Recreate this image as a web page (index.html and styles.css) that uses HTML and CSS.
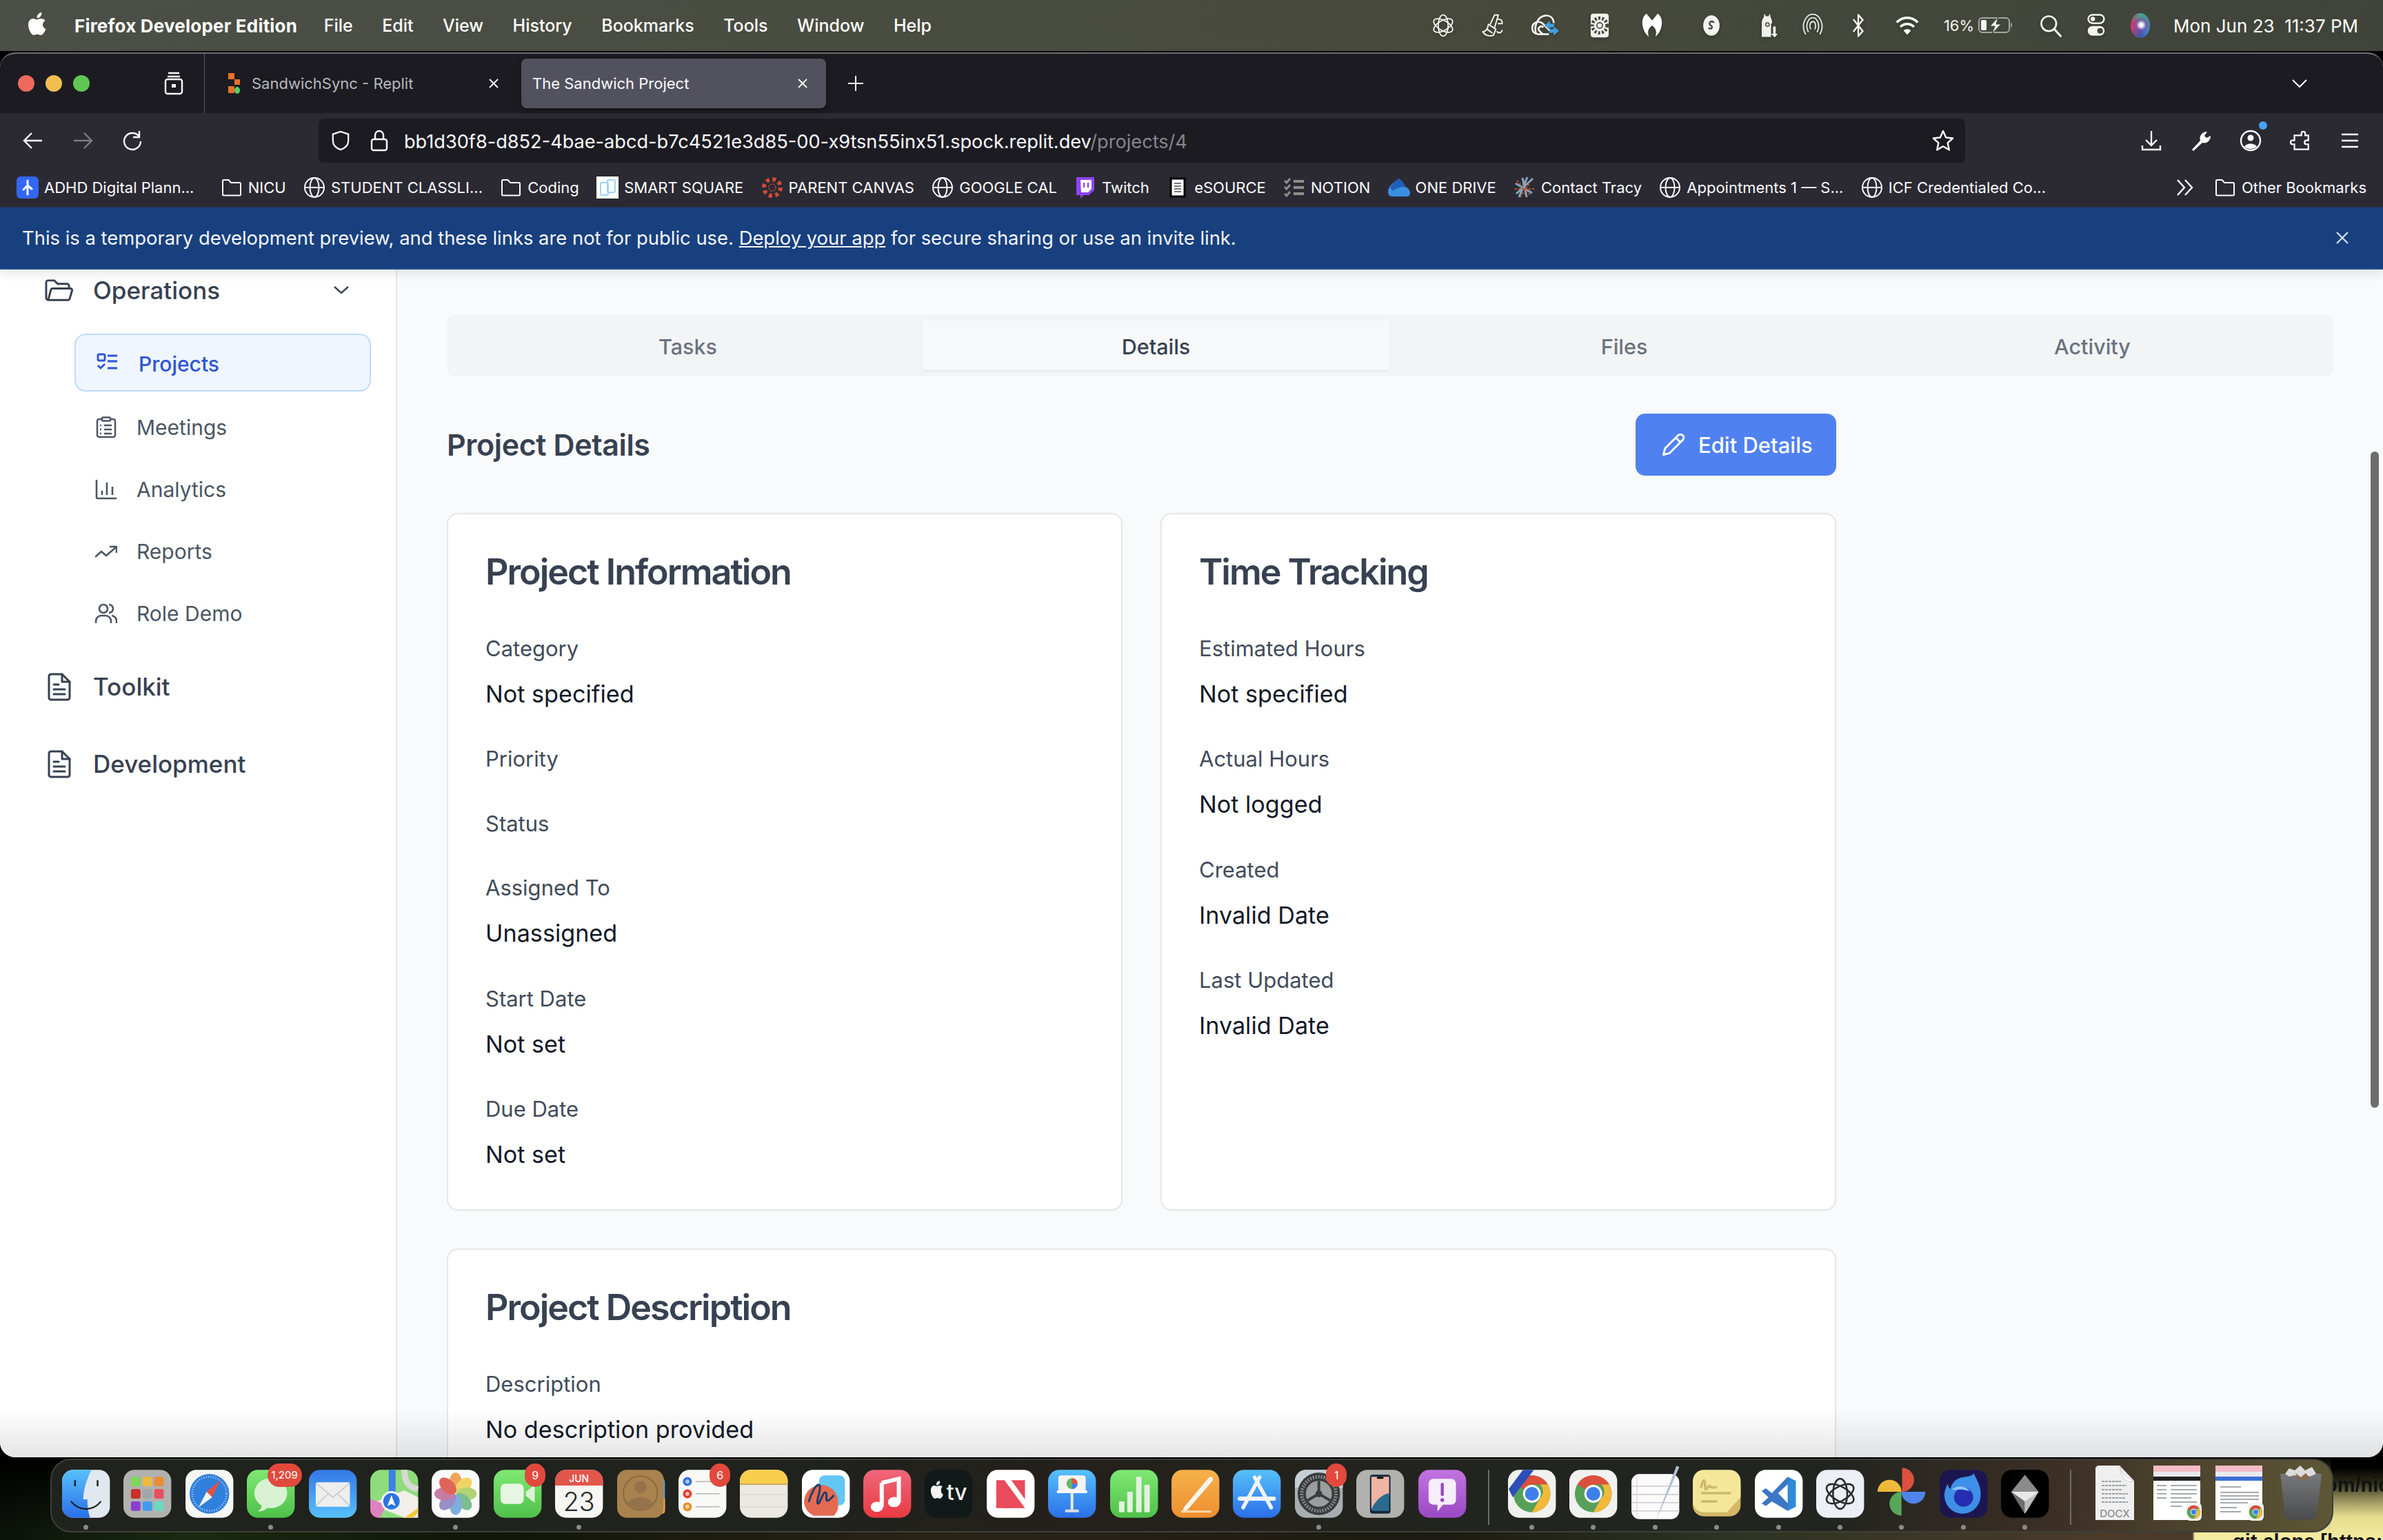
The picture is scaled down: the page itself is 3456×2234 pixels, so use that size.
FILE: index.html
```html
<!DOCTYPE html>
<html lang="en">
<head>
<meta charset="utf-8">
<title>The Sandwich Project</title>
<link rel="stylesheet" href="styles.css">
</head>
<body>
<svg class="sprite" aria-hidden="true">
  <defs>
    <linearGradient id="gBlue" x1="0" y1="0" x2="0" y2="1"><stop offset="0" stop-color="#57c1fb"/><stop offset="1" stop-color="#2a6fe8"/></linearGradient>
    <linearGradient id="gBlue2" x1="0" y1="0" x2="0" y2="1"><stop offset="0" stop-color="#3478e6"/><stop offset="1" stop-color="#58c0fa"/></linearGradient>
    <linearGradient id="gGreen" x1="0" y1="0" x2="0" y2="1"><stop offset="0" stop-color="#7fe873"/><stop offset="1" stop-color="#4fc14a"/></linearGradient>
    <linearGradient id="gRed" x1="0" y1="0" x2="0" y2="1"><stop offset="0" stop-color="#f0677c"/><stop offset="1" stop-color="#e83a42"/></linearGradient>
    <linearGradient id="gOrange" x1="0" y1="0" x2="0" y2="1"><stop offset="0" stop-color="#f6b24a"/><stop offset="1" stop-color="#ee8f30"/></linearGradient>
    <linearGradient id="gPurple" x1="0" y1="0" x2="0" y2="1"><stop offset="0" stop-color="#c274e0"/><stop offset="1" stop-color="#9a49c4"/></linearGradient>
    <linearGradient id="gTrash" x1="0" y1="0" x2="0" y2="1"><stop offset="0" stop-color="#77787a"/><stop offset="1" stop-color="#4a4b4c"/></linearGradient>
    <symbol id="folder" viewBox="0 0 32 32"><path d="M3 26V6.500A1.500 1.500 0 0 1 4.500 5h7l3.500 4h12.500A1.500 1.500 0 0 1 29 10.500V26a1.500 1.500 0 0 1-1.500 1.500h-23A1.500 1.500 0 0 1 3 26Z" fill="none" stroke="#fbfbfe" stroke-width="2"/></symbol>
    <symbol id="globe" viewBox="0 0 32 32"><g fill="none" stroke="#fbfbfe" stroke-width="2"><circle cx="16" cy="16" r="14"/><ellipse cx="16" cy="16" rx="6.500" ry="14"/><path d="M2 16h28"/></g></symbol>
    <symbol id="doc" viewBox="0 0 34 41"><g fill="none" stroke="#374151" stroke-width="3" stroke-linecap="round" stroke-linejoin="round"><path d="M2 5a3 3 0 0 1 3-3h16l11 11v23a3 3 0 0 1-3 3H5a3 3 0 0 1-3-3Z"/><path d="M21 2v11h11M9 17h7M9 24h16M9 31h16"/></g></symbol>
    <symbol id="chrome" viewBox="0 0 60 60"><circle cx="30" cy="30" r="28" fill="#57a05a"/><path d="M30 2a28 28 0 0 1 24.200 14H30a14 14 0 0 0-12.100 7L6 16A28 28 0 0 1 30 2Z" fill="#dd4f3e"/><path d="M54.200 16A28 28 0 0 1 30 58l12-21a14 14 0 0 0 0-21Z" fill="#f2b93b"/><circle cx="30" cy="30" r="13.500" fill="#fff"/><circle cx="30" cy="30" r="10.500" fill="#3f7fe8"/></symbol>
    <symbol id="knot" viewBox="0 0 40 40"><g fill="none" stroke="currentColor" stroke-width="2"><ellipse cx="20" cy="20" rx="8" ry="17"/><ellipse cx="20" cy="20" rx="8" ry="17" transform="rotate(60 20 20)"/><ellipse cx="20" cy="20" rx="8" ry="17" transform="rotate(120 20 20)"/></g></symbol>
  </defs>
</svg>

<div class="screen">
  <div class="wallpaper" aria-hidden="true">
    <span class="wp-url">om/nicu</span>
    <span class="wp-git">git clone [https://githu</span>
  </div>

  <header class="menubar">
    <svg class="apple" viewBox="0 0 28 34"><path d="M21 18c0-4 3-5.500 3.500-6-2-2.800-5-3-6-3-2.500-.3-5 1.500-6.200 1.500S9 9 7 9c-3 0-7 2.500-7 9 0 6.500 4.500 15 8 15 1.800 0 3-1.200 5-1.200s3 1.200 5 1.200c3.300 0 6.500-6 7.500-9-3-1.200-4.500-3.500-4.500-6ZM17.500 6c1.500-1.800 2.300-3.500 2-6-2 .1-4 1.200-5.200 2.700-1 1.200-2 3-1.700 5.300 2 .2 3.700-.6 4.900-2Z" fill="#fff"/></svg>
    <nav class="menus">
      <span class="menu-app">Firefox Developer Edition</span>
      <span>File</span><span>Edit</span><span>View</span><span>History</span><span>Bookmarks</span><span>Tools</span><span>Window</span><span>Help</span>
    </nav>
    <div class="status">
      <svg class="st" viewBox="0 0 40 40"><use href="#knot" class="st-white"/></svg>
      <svg class="st" viewBox="0 0 40 40"><g fill="none" stroke="#f4f4f2" stroke-width="2.200" stroke-linejoin="round" stroke-linecap="round"><path d="M14 18 26 26l-4 10c-6 2-14 0-17-6 5 0 8-4 9-12Z"/><path d="m17 18 7-15h6l-6 20"/><path d="M30 10c5 0 7 3 6 7h-6"/><path d="M28 30c3 3 7 2 8-2"/><path d="m12 26 8 6"/></g></svg>
      <svg class="st st-cc" viewBox="0 0 48 40"><g fill="none" stroke="#f4f4f2" stroke-width="3"><path d="M30 34H13C7 34 3 30 3 24s5-10 10-10c3 0 5 1 7 3l14 14"/><path d="M10 34C5 24 10 6 24 4c8-1 13 4 14 12"/><path d="m20 34-6-6c-3-4 3-9 7-5"/></g><path d="M34 15v5h7v6h-7v5l-9-8zM40 24v5h-7v6h7v5l9-8z" fill="#3f9de0" transform="translate(-1 -2) scale(.96)"/></svg>
      <svg class="st" viewBox="0 0 40 44"><rect x="4" y="1" width="32" height="42" rx="5" fill="#f1f1ee"/><circle cx="20" cy="22" r="13" fill="none" stroke="#45493a" stroke-width="6" stroke-dasharray="3.500 3"/><circle cx="20" cy="22" r="5" fill="none" stroke="#45493a" stroke-width="2"/></svg>
      <svg class="st" viewBox="0 0 40 44"><path d="M20 13 10 1C3 6 1 16 4 26c2 8 6 12 10 16-2-8-2-14 6-20 8 6 8 12 6 20 4-4 8-8 10-16 3-10 1-20-6-25Z" fill="#fff"/></svg>
      <svg class="st" viewBox="0 0 40 44"><ellipse cx="20" cy="22" rx="14.500" ry="18" fill="#f2f2ef"/><path d="M24 16c-6-4-10 3-5 6 4 2 2 7-3 5" fill="none" stroke="#45493a" stroke-width="3" stroke-linecap="round"/></svg>
      <svg class="st" viewBox="0 0 40 48"><path d="M8 46V20C8 14 10 10 12 8l1-7 3 5h5l3-5 1 7c2 3 3 7 3 12h-2v26Z" fill="#f0f0ed"/><circle cx="19" cy="22" r="3.500" fill="none" stroke="#45493a" stroke-width="2"/><path d="M30 26v14h-4l7 7 6-7h-4V26Z" fill="#f0f0ed"/></svg>
      <svg class="st" viewBox="0 0 40 44"><g fill="none" stroke="#e8e8e5" stroke-width="2.200" stroke-linecap="round"><path d="M7 37C-2 20 8 2 20 2s22 18 13 35"/><path d="M12 33C6 22 12 8 20 8s14 14 8 25"/><path d="M16 28c-3-6 0-13 4-13s7 7 4 13"/></g></svg>
      <svg class="st" viewBox="0 0 40 44"><path d="M12 12 28 32 20 41V3l8 9-16 20" fill="none" stroke="#f4f4f2" stroke-width="3" stroke-linecap="round" stroke-linejoin="round"/></svg>
      <svg class="st" viewBox="0 0 40 36"><g fill="none" stroke="#fff" stroke-width="4"><path d="M3 13c10-10 24-10 34 0"/><path d="M9 20c7-6 15-6 22 0"/></g><path d="M14 26c3-3 9-3 12 0l-6 7Z" fill="#fff"/></svg>
      <div class="batt"><span>16%</span><svg viewBox="0 0 54 24"><rect x="1" y="1" width="44" height="21" rx="5" fill="none" stroke="#a5a79f" stroke-width="2"/><rect x="4" y="4" width="8" height="15" rx="2" fill="#f4f4f2"/><path d="M47 8c2 1 2 6 0 7" fill="#a5a79f" stroke="#a5a79f"/><path d="M29 0 17 13h7l-4 11 13-14h-7z" fill="#f4f4f2" stroke="#42453a"/></svg></div>
      <svg class="st" viewBox="0 0 40 40"><circle cx="17" cy="17" r="12" fill="none" stroke="#f4f4f2" stroke-width="3"/><path d="m26 26 10 11" stroke="#f4f4f2" stroke-width="3.500" stroke-linecap="round"/></svg>
      <svg class="st" viewBox="0 0 40 44"><rect x="6" y="3" width="28" height="15" rx="7.500" fill="none" stroke="#f4f4f2" stroke-width="3"/><circle cx="14" cy="10.500" r="4" fill="#f4f4f2"/><rect x="5" y="23" width="30" height="17" rx="8.500" fill="#f4f4f2"/><circle cx="27" cy="31.500" r="5" fill="#42453a"/></svg>
      <i class="siri"></i>
      <span class="clock">Mon Jun 23&nbsp; 11:37 PM</span>
    </div>
  </header>

  <main class="window">
    <div class="tabbar">
      <div class="lights"><i class="l-red"></i><i class="l-yel"></i><i class="l-grn"></i></div>
      <div class="fxview"><svg viewBox="0 0 28 34"><g fill="none" stroke="#fbfbfe" stroke-width="2.400"><path d="M6 2h16"/><path d="M5 7h18"/><rect x="2" y="11" width="24" height="21" rx="3"/></g><rect x="11" y="18" width="6" height="5" fill="#fbfbfe"/></svg></div>
      <div class="tab">
        <svg class="fav" viewBox="0 0 24 32"><rect x="2" y="1" width="9" height="9" fill="#e8702a"/><rect x="11" y="10" width="8" height="8" fill="#e8702a"/><rect x="2" y="20" width="9" height="10" fill="#e8702a"/><ellipse cx="15" cy="26" rx="4" ry="5" fill="#57d06a"/></svg>
        <span class="tab-title">SandwichSync - Replit</span>
        <svg class="tab-x" viewBox="0 0 16 16"><path d="m2 2 12 12M14 2 2 14" stroke="#fbfbfe" stroke-width="1.800"/></svg>
      </div>
      <div class="tab tab-on">
        <span class="tab-title">The Sandwich Project</span>
        <svg class="tab-x" viewBox="0 0 16 16"><path d="m2 2 12 12M14 2 2 14" stroke="#fbfbfe" stroke-width="1.800"/></svg>
      </div>
      <svg class="newtab" viewBox="0 0 24 24"><path d="M12 1v22M1 12h22" stroke="#fbfbfe" stroke-width="2"/></svg>
      <svg class="tabs-more" viewBox="0 0 24 24"><path d="m2 7 10 10L22 7" fill="none" stroke="#fbfbfe" stroke-width="2"/></svg>
    </div>

    <div class="toolbar">
      <svg class="tb tb-first" viewBox="0 0 32 32"><path d="M29 16H4M14 5 3 16l11 11" fill="none" stroke="#fbfbfe" stroke-width="2.400"/></svg>
      <svg class="tb" viewBox="0 0 32 32"><path d="M3 16h25M18 5l11 11-11 11" fill="none" stroke="#7d7d84" stroke-width="2.400"/></svg>
      <svg class="tb" viewBox="0 0 32 32"><path d="M25 9a12 12 0 1 0 3 8M26 2v9h-9" fill="none" stroke="#fbfbfe" stroke-width="2.400"/></svg>
      <div class="urlbar">
        <svg class="ub-shield" viewBox="0 0 30 32"><path d="M15 2 3 6v10c0 8 6 12 12 14 6-2 12-6 12-14V6Z" fill="none" stroke="#fbfbfe" stroke-width="2.400"/></svg>
        <svg class="ub-lock" viewBox="0 0 26 32"><g fill="none" stroke="#fbfbfe" stroke-width="2.400"><rect x="2" y="14" width="22" height="16" rx="3"/><path d="M7 14V8a6 6 0 0 1 12 0v6"/></g></svg>
        <span class="url"><span>bb1d30f8-d852-4bae-abcd-b7c4521e3d85-00-x9tsn55inx51.spock.replit.dev</span><span class="url-path">/projects/4</span></span>
        <svg class="ub-star" viewBox="0 0 32 32"><path d="m16 2 4.200 9.500 10 1-7.600 6.800 2.200 10.200L16 24.200 7.200 29.500l2.200-10.200L1.800 12.500l10-1Z" fill="none" stroke="#fbfbfe" stroke-width="2.400" stroke-linejoin="round"/></svg>
      </div>
      <div class="tb-right">
        <svg class="tb" viewBox="0 0 32 32"><path d="M16 2v21M8 15l8 8 8-8M3 23v6h26v-6" fill="none" stroke="#fbfbfe" stroke-width="2.400"/></svg>
        <svg class="tb" viewBox="0 0 32 32"><path d="M3 29 15 16c-2-6 2-13 10-13l-4 6 3 3 6-3c0 7-6 12-12 10L5 31Z" fill="#fbfbfe"/></svg>
        <span class="acct"><svg class="tb" viewBox="0 0 32 32"><circle cx="16" cy="16" r="14" fill="none" stroke="#fbfbfe" stroke-width="2.400"/><circle cx="16" cy="12" r="4.500" fill="#fbfbfe"/><path d="M7 25c2-6 16-6 18 0-5 4-13 4-18 0Z" fill="#fbfbfe"/></svg><i class="acct-dot"></i></span>
        <svg class="tb" viewBox="0 0 32 32"><path d="M12 8h5V5a3 3 0 0 1 6 0v3h5v8h-3a3 3 0 0 0 0 6h3v8H6V22H3a3 3 0 0 1 0-6h3V8Z" transform="translate(2 1) scale(.92)" fill="none" stroke="#fbfbfe" stroke-width="2.400"/></svg>
        <svg class="tb" viewBox="0 0 32 32"><path d="M4 7h24M4 16h24M4 25h24" stroke="#fbfbfe" stroke-width="2.400"/></svg>
      </div>
    </div>

    <div class="bookmarks">
      <a class="bm bm-first"><svg class="bi" viewBox="0 0 32 32"><rect width="32" height="32" rx="6" fill="#3366f5"/><path d="M16 6v7M16 17v9M16 13l-6 6M16 13l6 5" stroke="#fff" stroke-width="3" stroke-linecap="round"/></svg><span>ADHD Digital Plann...</span></a>
      <a class="bm"><svg class="bi" viewBox="0 0 32 32"><use href="#folder"/></svg><span>NICU</span></a>
      <a class="bm"><svg class="bi" viewBox="0 0 32 32"><use href="#globe"/></svg><span>STUDENT CLASSLI...</span></a>
      <a class="bm"><svg class="bi" viewBox="0 0 32 32"><use href="#folder"/></svg><span>Coding</span></a>
      <a class="bm"><svg class="bi" viewBox="0 0 32 32"><rect width="32" height="32" fill="#fff"/><rect x="6" y="9" width="11" height="18" rx="2" fill="none" stroke="#9fd4f3" stroke-width="2"/><rect x="16" y="5" width="11" height="18" rx="2" fill="none" stroke="#9fd4f3" stroke-width="2"/></svg><span>SMART SQUARE</span></a>
      <a class="bm"><svg class="bi" viewBox="0 0 32 32"><circle cx="16" cy="16" r="12" fill="none" stroke="#d24a36" stroke-width="6" stroke-dasharray="5 4.400"/><circle cx="16" cy="16" r="5" fill="none" stroke="#d24a36" stroke-width="1.500" stroke-dasharray="2 2"/></svg><span>PARENT CANVAS</span></a>
      <a class="bm"><svg class="bi" viewBox="0 0 32 32"><use href="#globe"/></svg><span>GOOGLE CAL</span></a>
      <a class="bm"><svg class="bi" viewBox="0 0 32 32"><path d="M3 1h26v19l-8 7h-7l-5 5v-5H3Z" fill="#8c45f7"/><path d="M9 5h16v13l-5 5H10Z" fill="#fff"/><path d="M14 9v7M20 9v7" stroke="#8c45f7" stroke-width="2.400"/></svg><span>Twitch</span></a>
      <a class="bm"><svg class="bi" viewBox="0 0 32 32"><rect x="6" y="3" width="20" height="26" fill="#fff" stroke="#000" stroke-width="3"/><path d="M11 10h10M11 14h10M11 18h10M11 22h10" stroke="#777" stroke-width="2"/></svg><span>eSOURCE</span></a>
      <a class="bm"><svg class="bi" viewBox="0 0 32 32"><path d="M15 7h15M15 16h15M15 25h15" stroke="#8d8d8a" stroke-width="4"/><path d="m2 6 3 3 5-6M2 15l3 3 5-6M2 25l3 3 5-6" fill="none" stroke="#8d8d8a" stroke-width="3"/></svg><span>NOTION</span></a>
      <a class="bm"><svg class="bi" viewBox="0 0 32 32"><path d="M16 3c4 3 8 8 9 12 5 2 7 6 7 9 0 3-2 5-5 5H6c-4 0-6-3-6-7 0-8 9-14 16-19Z" fill="#3b8fe2"/><path d="M16 3c4 3 8 8 9 12-8 0-15 3-18 6L3 16C7 10 11 7 16 3Z" fill="#1f5eb8"/></svg><span>ONE DRIVE</span></a>
      <a class="bm"><svg class="bi" viewBox="0 0 32 32"><path d="M20 1 8 30M28 3 4 25M3 10l24 14M13 2l6 28" stroke="#8aa7bf" stroke-width="3"/><path d="m5 6 20 22M2 18h28M10 30 24 8" stroke="#b8552b" stroke-width="2" stroke-dasharray="3 2"/></svg><span>Contact Tracy</span></a>
      <a class="bm"><svg class="bi" viewBox="0 0 32 32"><use href="#globe"/></svg><span>Appointments 1 — S...</span></a>
      <a class="bm"><svg class="bi" viewBox="0 0 32 32"><use href="#globe"/></svg><span>ICF Credentialed Co...</span></a>
      <svg class="bm-more" viewBox="0 0 28 26"><path d="m3 2 10 11L3 24M14 2l10 11-10 11" fill="none" stroke="#fbfbfe" stroke-width="2.400"/></svg>
      <a class="bm"><svg class="bi" viewBox="0 0 32 32"><use href="#folder"/></svg><span>Other Bookmarks</span></a>
    </div>

    <div class="banner">
      <p>This is a temporary development preview, and these links are not for public use. <a>Deploy your app</a> for secure sharing or use an invite link.</p>
      <svg class="banner-x" viewBox="0 0 20 20"><path d="m2 2 16 16M18 2 2 18" stroke="#d5e1f2" stroke-width="2.200"/></svg>
    </div>

    <div class="app">
      <aside class="sidebar">
        <div class="side-row side-open">
          <svg class="ico-folder" viewBox="0 0 42 34"><path d="M5 31a3 3 0 0 1-3-3V5a3 3 0 0 1 3-3h9l5 5h14a3 3 0 0 1 3 3v3M5 31l4-15a3 3 0 0 1 3-2h26a2.500 2.500 0 0 1 2.500 3L37 29a3 3 0 0 1-3 2Z" fill="none" stroke="#374151" stroke-width="3" stroke-linejoin="round"/></svg>
          <span>Operations</span>
          <svg class="ico-chev" viewBox="0 0 22 12"><path d="m1 1 10 9 10-9" fill="none" stroke="#374151" stroke-width="2.400"/></svg>
        </div>
        <a class="sub sub-on">
          <svg viewBox="0 0 32 32"><g fill="none" stroke="#2f55d4" stroke-width="2.800"><rect x="3" y="2" width="10" height="9" rx="1.500"/><path d="M17 4h14M17 12h14M17 22h14M3 18l4 4 6-6"/></g></svg>
          <span>Projects</span>
        </a>
        <a class="sub">
          <svg viewBox="0 0 32 32"><g fill="none" stroke="#4b5563" stroke-width="2.500"><rect x="3" y="4" width="26" height="26" rx="3"/><rect x="10" y="1.500" width="12" height="5" rx="1.500" fill="#fff"/><path d="M13 13h11M13 19h11M13 25h11M7 13h2M7 19h2M7 25h2"/></g></svg>
          <span>Meetings</span>
        </a>
        <a class="sub">
          <svg viewBox="0 0 32 32"><g fill="none" stroke="#4b5563" stroke-width="2.600"><path d="M2 2v25a2 2 0 0 0 2 2h27"/><path d="M10 18v6M17 6v18M25 12v12"/></g></svg>
          <span>Analytics</span>
        </a>
        <a class="sub">
          <svg viewBox="0 0 32 32"><path d="m0 24 9-8 7 6L30 10M21 9h10v9" fill="none" stroke="#4b5563" stroke-width="2.600"/></svg>
          <span>Reports</span>
        </a>
        <a class="sub">
          <svg viewBox="0 0 32 32"><g fill="none" stroke="#4b5563" stroke-width="2.600"><circle cx="12" cy="9" r="6"/><path d="M1 30v-3a8 8 0 0 1 8-8h6a8 8 0 0 1 8 8v3M20 3a6 6 0 0 1 0 12M24 19a8 8 0 0 1 7 8v3"/></g></svg>
          <span>Role Demo</span>
        </a>
        <div class="side-row side-tool">
          <svg class="ico-doc" viewBox="0 0 34 41"><use href="#doc"/></svg>
          <span>Toolkit</span>
        </div>
        <div class="side-row side-dev">
          <svg class="ico-doc" viewBox="0 0 34 41"><use href="#doc"/></svg>
          <span>Development</span>
        </div>
      </aside>

      <section class="main">
        <div class="tabs">
          <div class="tabs-item">Tasks</div>
          <div class="tabs-item tabs-on">Details</div>
          <div class="tabs-item">Files</div>
          <div class="tabs-item">Activity</div>
        </div>
        <div class="details">
          <div class="details-head">
            <h2>Project Details</h2>
            <button class="edit-btn" type="button">
              <svg viewBox="0 0 34 34"><path d="M6 22 23 5a4 4 0 0 1 6 6L12 28l-8 2ZM20 8l6 6" fill="none" stroke="#fff" stroke-width="2.600" stroke-linejoin="round"/></svg>
              Edit Details
            </button>
          </div>
          <div class="card-grid">
            <article class="card">
              <h3>Project Information</h3>
              <dl class="fields">
                <div class="field"><dt>Category</dt><dd>Not specified</dd></div>
                <div class="field"><dt>Priority</dt></div>
                <div class="field"><dt>Status</dt></div>
                <div class="field"><dt>Assigned To</dt><dd>Unassigned</dd></div>
                <div class="field"><dt>Start Date</dt><dd>Not set</dd></div>
                <div class="field"><dt>Due Date</dt><dd>Not set</dd></div>
              </dl>
            </article>
            <article class="card">
              <h3>Time Tracking</h3>
              <dl class="fields">
                <div class="field"><dt>Estimated Hours</dt><dd>Not specified</dd></div>
                <div class="field"><dt>Actual Hours</dt><dd>Not logged</dd></div>
                <div class="field"><dt>Created</dt><dd>Invalid Date</dd></div>
                <div class="field"><dt>Last Updated</dt><dd>Invalid Date</dd></div>
              </dl>
            </article>
            <article class="card card-wide">
              <h3>Project Description</h3>
              <dl class="fields">
                <div class="field"><dt>Description</dt><dd>No description provided</dd></div>
              </dl>
            </article>
          </div>
        </div>
        <div class="scrollthumb"></div>
      </section>
    </div>
  </main>

  <footer class="dock">
    <div class="di dot"><svg viewBox="0 0 70 70"><rect width="70" height="70" rx="16" fill="#e2e8f0"/><path d="M16 0h27c-7 14-12 30-12 43h6c0 9 1 18 4 27H16A16 16 0 0 1 0 54V16A16 16 0 0 1 16 0Z" fill="url(#gBlue)"/><path d="M19 15v9M52 15v9" stroke="#222" stroke-width="2.500"/><path d="M13 46c12 15 32 15 44 0" fill="none" stroke="#1c1c1c" stroke-width="2.200"/></svg></div>
    <div class="di"><svg viewBox="0 0 70 70"><rect width="70" height="70" rx="16" fill="#b1b1b0"/><rect x="11" y="10" width="14" height="14" rx="3" fill="#7fd65a"/><rect x="28" y="10" width="14" height="14" rx="3" fill="#f1b93b"/><rect x="45" y="10" width="14" height="14" rx="3" fill="#e88e33"/><rect x="11" y="28" width="14" height="14" rx="3" fill="#c9302a"/><rect x="28" y="28" width="14" height="14" rx="3" fill="#a0a6a8"/><rect x="45" y="28" width="14" height="14" rx="3" fill="#e8505f"/><rect x="11" y="46" width="14" height="14" rx="3" fill="#8a3fd0"/><rect x="28" y="46" width="14" height="14" rx="3" fill="#3f9cf0"/><rect x="45" y="46" width="14" height="14" rx="3" fill="#6fd8c0"/></svg></div>
    <div class="di"><svg viewBox="0 0 70 70"><rect width="70" height="70" rx="16" fill="#f6f6f6"/><circle cx="35" cy="35" r="29" fill="#2f7fdc"/><circle cx="35" cy="35" r="25" fill="none" stroke="#b8d7f5" stroke-width="3" stroke-dasharray="1 2.500"/><path d="M51 15 31 32l8 8Z" fill="#e8503e"/><path d="M19 55 31 32l8 8Z" fill="#f4f4f4"/></svg></div>
    <div class="di dot"><svg viewBox="0 0 70 70"><rect width="70" height="70" rx="16" fill="url(#gGreen)"/><ellipse cx="35" cy="34" rx="24" ry="22" fill="#d8f2d3"/><path d="M22 50c0 6-3 9-6 11 6 0 11-2 15-6Z" fill="#d8f2d3"/></svg><b class="badge badge-wide">1,209</b></div>
    <div class="di"><svg viewBox="0 0 70 70"><rect width="70" height="70" rx="16" fill="url(#gBlue2)"/><rect x="10" y="18" width="50" height="36" rx="3" fill="#eeeeef"/><path d="m11 20 24 20 24-20M11 52l17-17M59 52 42 35" fill="none" stroke="#c6c6c8" stroke-width="1.500"/></svg></div>
    <div class="di"><svg viewBox="0 0 70 70"><rect width="70" height="70" rx="16" fill="#8edc7c"/><path d="M0 50 50 70h20V40L50 30Z" fill="#f1efe8"/><path d="M0 42v16a12 12 0 0 0 12 12h2l10-18Z" fill="#df82bf"/><path d="m50 70 20-14v2a12 12 0 0 1-12 12Z" fill="#f2c93c"/><path d="M27 0h10v50H27Z" fill="#3d80e6"/><path d="M50 0c0 18 6 26 20 28" fill="none" stroke="#d8d8d4" stroke-width="9"/><circle cx="31" cy="46" r="15" fill="#eef4fc"/><circle cx="31" cy="46" r="12" fill="#2c74e0"/><path d="m31 37 6 16-6-3-6 3Z" fill="#fff"/></svg></div>
    <div class="di dot"><svg viewBox="0 0 70 70"><rect width="70" height="70" rx="16" fill="#fafafa"/><g opacity=".78"><ellipse cx="35" cy="19" rx="9.500" ry="15" fill="#ef8d2c"/><ellipse cx="35" cy="19" rx="9.500" ry="15" fill="#eecb3c" transform="rotate(45 35 35)"/><ellipse cx="35" cy="19" rx="9.500" ry="15" fill="#9fc94f" transform="rotate(90 35 35)"/><ellipse cx="35" cy="19" rx="9.500" ry="15" fill="#58ad6e" transform="rotate(135 35 35)"/><ellipse cx="35" cy="19" rx="9.500" ry="15" fill="#5d9ad8" transform="rotate(180 35 35)"/><ellipse cx="35" cy="19" rx="9.500" ry="15" fill="#7d72b8" transform="rotate(225 35 35)"/><ellipse cx="35" cy="19" rx="9.500" ry="15" fill="#b9598f" transform="rotate(270 35 35)"/><ellipse cx="35" cy="19" rx="9.500" ry="15" fill="#d83a2c" transform="rotate(315 35 35)"/></g></svg></div>
    <div class="di"><svg viewBox="0 0 70 70"><rect width="70" height="70" rx="16" fill="url(#gGreen)"/><rect x="10" y="20" width="34" height="30" rx="7" fill="#e6f6e2"/><path d="m47 32 13-10v26L47 38Z" fill="#dcf2d8"/></svg><b class="badge">9</b></div>
    <div class="di dot"><svg viewBox="0 0 70 70"><rect width="70" height="70" rx="16" fill="#f7f6f3"/><path d="M16 0h38a16 16 0 0 1 16 16v7H0v-7A16 16 0 0 1 16 0Z" fill="#e2564b"/><text x="35" y="18" class="cal-mon">JUN</text><text x="35" y="60" class="cal-day">23</text></svg></div>
    <div class="di"><svg viewBox="0 0 70 70"><rect x="50" y="10" width="20" height="55" rx="8" fill="#4fa0d8"/><rect x="58" y="40" width="12" height="24" rx="4" fill="#eda23a"/><rect width="68" height="70" rx="14" fill="#a9824f"/><circle cx="34" cy="34" r="25" fill="none" stroke="#8a6a40" stroke-width="2"/><circle cx="34" cy="25" r="9" fill="#94734a"/><path d="M14 52c4-16 36-16 40 0-10 9-30 9-40 0Z" fill="#94734a"/></svg></div>
    <div class="di"><svg viewBox="0 0 70 70"><rect width="70" height="70" rx="16" fill="#f8f8f6"/><circle cx="13" cy="17" r="6.500" fill="#2d6fe0"/><circle cx="13" cy="35" r="6.500" fill="#e2392f"/><circle cx="13" cy="54" r="6.500" fill="#ea8f24"/><circle cx="13" cy="17" r="3" fill="#a8c6f4"/><circle cx="13" cy="35" r="3" fill="#f7b6b0"/><circle cx="13" cy="54" r="3" fill="#f8d3a1"/><path d="M25 17h35M25 35h35M25 54h35" stroke="#b4b4b2" stroke-width="1.500"/></svg><b class="badge">6</b></div>
    <div class="di"><svg viewBox="0 0 70 70"><rect width="70" height="70" rx="16" fill="#ebe9e1"/><path d="M16 0h38a16 16 0 0 1 16 16v5H0v-5A16 16 0 0 1 16 0Z" fill="#f8cf4d"/><path d="M0 21h70" stroke="#c8a858" stroke-width="2"/><path d="M0 36h70M0 54h70" stroke="#dbd9d2" stroke-width="1.500"/></svg></div>
    <div class="di"><svg viewBox="0 0 70 70"><rect width="70" height="70" rx="16" fill="#fff"/><rect x="25" y="8" width="38" height="44" rx="8" fill="#62c8f3"/><path d="M28 22a25 25 0 0 0-25 25 25 25 0 0 0 14 20h30a25 25 0 0 0 6-20 25 25 0 0 0-25-25Z" fill="#e46a52"/><path d="M10 47c3-12 12-30 16-24 3 6-6 22-3 26 3 3 7-16 11-16s0 12 3 12 6-4 10-8" fill="none" stroke="#1f3b6b" stroke-width="3"/></svg></div>
    <div class="di"><svg viewBox="0 0 70 70"><rect width="70" height="70" rx="16" fill="url(#gRed)"/><path d="M27 19 52 13v35" fill="none" stroke="#fff" stroke-width="6"/><path d="M27 19v35" stroke="#fff" stroke-width="6"/><ellipse cx="20" cy="54" rx="9" ry="7.500" fill="#fff"/><ellipse cx="45" cy="47" rx="9" ry="7.500" fill="#fff"/></svg></div>
    <div class="di"><svg viewBox="0 0 70 70"><rect width="70" height="70" rx="16" fill="#111a18"/><path d="M24 29c0-3 2-4 2-4-1-2-3-2-4-2-2 0-3 1-4 1s-2-1-4-1c-3 0-5 3-5 7 0 5 3 12 6 12 1 0 2-1 4-1 1 0 2 1 3 1 3 0 5-5 5-6-2-1-3-3-3-7ZM21 21c1-1 2-3 1-5-1 0-3 1-4 2-1 1-1 3-1 4 2 1 3 0 4-1Z" fill="#f2f2f2"/><text x="47" y="44" class="tv">tv</text></svg></div>
    <div class="di"><svg viewBox="0 0 70 70"><rect width="70" height="70" rx="16" fill="#fff"/><path d="M14 15h12l30 41H26l-12-17Z" fill="#e94a5c"/><path d="M36 15h20v28ZM14 34l20 22H14Z" fill="#e94a5c"/></svg></div>
    <div class="di"><svg viewBox="0 0 70 70"><rect width="70" height="70" rx="16" fill="url(#gBlue)"/><path d="M15 31h40V12a4 4 0 0 0-4-4H19a4 4 0 0 0-4 4Z" fill="#f4f4f4"/><rect x="13" y="30" width="44" height="4" fill="#fff"/><path d="M33 34h4v24h-4Z" fill="#e8eef5"/><path d="M25 58h20v4H25Z" fill="#d8dfe8"/><circle cx="35" cy="20" r="8" fill="#69b46a"/><path d="M35 20V12a8 8 0 0 1 8 8Z" fill="#e8503e"/><path d="M35 20h8a8 8 0 0 1-8 8Z" fill="#3f7fe8"/></svg></div>
    <div class="di"><svg viewBox="0 0 70 70"><rect width="70" height="70" rx="16" fill="url(#gGreen)"/><rect x="13" y="46" width="8" height="16" rx="1" fill="#e2f2de"/><rect x="25" y="32" width="8" height="30" rx="1" fill="#e2f2de"/><rect x="38" y="10" width="8" height="52" rx="1" fill="#e2f2de"/><rect x="50" y="22" width="8" height="40" rx="1" fill="#e2f2de"/></svg></div>
    <div class="di"><svg viewBox="0 0 70 70"><rect width="70" height="70" rx="16" fill="url(#gOrange)"/><path d="M54 12c3-4 8-1 6 4L22 60l-6 2 2-7Z" fill="#f7f4ee"/><path d="M14 61h44" stroke="#f7d9a8" stroke-width="3"/></svg></div>
    <div class="di"><svg viewBox="0 0 70 70"><rect width="70" height="70" rx="16" fill="url(#gBlue)"/><path d="m32 11 24 44M39 11 15 55" stroke="#f2f4f8" stroke-width="5.500" stroke-linecap="round"/><path d="M10 42h50" stroke="#f2f4f8" stroke-width="6" stroke-linecap="round"/></svg></div>
    <div class="di dot"><svg viewBox="0 0 70 70"><rect width="70" height="70" rx="16" fill="#a8aeb0"/><path d="M16 0h38a16 16 0 0 1 16 16v10H0V16A16 16 0 0 1 16 0Z" fill="#c5d0d5"/><circle cx="35" cy="35" r="31" fill="#3a3b3c"/><circle cx="35" cy="35" r="25" fill="none" stroke="#8b8c8d" stroke-width="5" stroke-dasharray="2 2"/><circle cx="35" cy="35" r="19" fill="#9c9d9e"/><path d="M35 35V16M35 35 18 45M35 35l17 10" stroke="#3a3b3c" stroke-width="4"/><circle cx="35" cy="35" r="5" fill="#3a3b3c"/></svg><b class="badge">1</b></div>
    <div class="di"><svg viewBox="0 0 70 70"><rect width="70" height="70" rx="16" fill="#b1b1af"/><rect x="20" y="7" width="30" height="57" rx="4" fill="#15293a"/><path d="M22 10h26v28c-10 2-18 10-26 20Z" fill="#efb4a4"/><path d="M22 58c6-14 16-22 26-24v26H24Z" fill="#2a6a8e"/><rect x="30" y="10" width="10" height="3" rx="1.500" fill="#111"/></svg></div>
    <div class="di"><svg viewBox="0 0 70 70"><rect width="70" height="70" rx="16" fill="url(#gPurple)"/><path d="M22 13h26a7 7 0 0 1 7 7v24a7 7 0 0 1-7 7H36l-8 10v-10h-6a7 7 0 0 1-7-7V20a7 7 0 0 1 7-7Z" fill="#f6eefa"/><path d="M35 21v15" stroke="#9a49c4" stroke-width="4.500" stroke-linecap="round"/><circle cx="35" cy="44" r="2.800" fill="#9a49c4"/></svg></div>
    <i class="dock-sep dock-sep-a"></i>
    <div class="di dot"><svg viewBox="0 0 70 70"><rect width="70" height="70" rx="16" fill="#f1f1ef"/><use href="#chrome" x="6" y="6" width="58" height="58"/><path d="M22 0h16L7 40 1 28Z" fill="#2b4fb8"/></svg></div>
    <div class="di dot"><svg viewBox="0 0 70 70"><rect width="70" height="70" rx="16" fill="#f1f1ef"/><use href="#chrome" x="6" y="6" width="58" height="58"/></svg></div>
    <div class="di dot"><svg viewBox="0 0 70 80" class="tall"><rect y="14" width="70" height="66" rx="12" fill="#fbfbfb"/><path d="M0 32h70M0 44h70M0 56h70M0 68h70" stroke="#c9c9d3" stroke-width="1.500"/><path d="M8 14v66" stroke="#f3c4c4"/><path d="M66 2 44 60l-8 20 8-16L70 4Z" fill="#aebfd2"/></svg></div>
    <div class="di dot"><svg viewBox="0 0 70 70"><path d="M0 20v32a16 16 0 0 0 16 16h38a16 16 0 0 0 16-16V20Z" fill="#d4b867"/><path d="M16 0h38a16 16 0 0 1 16 16v24L50 62H16A16 16 0 0 1 0 46V16A16 16 0 0 1 16 0Z" fill="#f4e79a"/><path d="M12 26c3-14 6-14 6-2s5-4 7 0 8 0 10 2M12 34h44M12 46h24" fill="none" stroke="#cdb96a" stroke-width="3.500"/></svg></div>
    <div class="di dot"><svg viewBox="0 0 70 70"><rect width="70" height="70" rx="16" fill="#fff"/><path d="M48 10 60 16v38l-12 6Z" fill="#2e8ad8"/><path d="M48 10 25 34l-9-7-6 4 10 9-10 9 6 4 9-7 23 14 1-10-15-16 15-14Z" fill="#3c76c4"/></svg></div>
    <div class="di dot"><svg viewBox="0 0 70 70"><rect width="70" height="70" rx="16" fill="#ebeff6"/><use href="#knot" x="9" y="9" width="52" height="52" class="knot-dark"/></svg></div>
    <div class="di dot"><svg viewBox="0 0 80 80" class="tall"><path d="M41 40V0a20 20 0 0 1 0 40Z" fill="#dc5140"/><path d="M40 40H0a20 20 0 0 1 40 0Z" fill="#f0b93b"/><path d="M40 40v40a20 20 0 0 1 0-40Z" fill="#57a75a"/><path d="M40 40h40a20 20 0 0 1-40 0Z" fill="#5183ec"/></svg></div>
    <div class="di dot"><svg viewBox="0 0 70 70"><rect width="70" height="70" rx="16" fill="#1b1650"/><path d="M50 5c3 8 11 17 10 33-1 16-13 26-26 26C20 64 8 54 7 38c0-8 3-14 5-18 0 4 2 6 4 8 1-8 7-14 13-16 9-3 17-1 21-7Z" fill="#3d8fe8"/><circle cx="35" cy="40" r="14" fill="#262db0"/><path d="M18 28c8-6 20-5 26 3l-10-2c-5-1-11 2-16-1Z" fill="#8bc4f8"/></svg></div>
    <div class="di dot"><svg viewBox="0 0 70 70"><rect width="70" height="70" rx="16" fill="#000"/><path d="M35 7 55 32H15Z" fill="#8b8b8b"/><path d="M15 32h40L35 64Z" fill="#e8e8e8"/><path d="M35 64 15 32l20 14Z" fill="#6d6d6d"/><path d="M35 64 55 32 35 46Z" fill="#bdbdbd"/></svg></div>
    <i class="dock-sep dock-sep-b"></i>
    <div class="di di-doc"><svg viewBox="0 0 58 81"><path d="M4 1h32l21 22v57H1V4Z" fill="#efefef"/><path d="M36 1c2 10 8 18 21 22-9 4-17 0-21-22Z" fill="#fff" stroke="#ccc"/><path d="M10 24h28M10 30h36M10 36h30M10 42h38M10 48h34M10 54h38" stroke="#99a0a8" stroke-width="2" stroke-dasharray="4 1"/><text x="29" y="76" class="docx">DOCX</text></svg></div>
    <div class="di di-shot"><svg viewBox="0 0 70 81"><rect x="1" y="1" width="68" height="79" fill="#fff"/><rect x="1" y="1" width="68" height="9" fill="#f4bcc6"/><rect x="1" y="10" width="68" height="7" fill="#e9e9ee"/><rect x="1" y="17" width="68" height="6" fill="#222"/><path d="M6 30h14M6 36h14M6 42h14M6 48h14M26 30h38M26 36h38M26 42h38M26 48h30M26 54h38M26 60h16" stroke="#a6a9ae" stroke-width="2"/><rect x="48" y="55" width="23" height="26" rx="6" fill="#f4f4f4"/><use href="#chrome" x="49" y="58" width="21" height="21"/></svg></div>
    <div class="di di-shot di-shot2"><svg viewBox="0 0 70 81"><rect x="1" y="1" width="68" height="79" fill="#fff"/><rect x="1" y="1" width="68" height="9" fill="#f4bcc6"/><rect x="1" y="10" width="68" height="7" fill="#e9e9ee"/><rect x="1" y="17" width="68" height="6" fill="#3a6fd8"/><path d="M8 32h30M8 40h56M8 45h56M8 50h56M8 55h40M8 62h24M8 68h30" stroke="#a6a9ae" stroke-width="2"/><rect x="48" y="55" width="23" height="26" rx="6" fill="#f4f4f4"/><use href="#chrome" x="49" y="58" width="21" height="21"/></svg></div>
    <div class="di di-trash"><svg viewBox="0 0 62 80"><path d="M1 13h60l-7 60c-1 5-6 7-23 7S9 78 8 73Z" fill="url(#gTrash)"/><path d="m8 13 6-8 8 3 8-7 7 7 10-5 6 10-9 4-7-3-6 4-9-3-8 2Z" fill="#dcdcdc"/><path d="m23 12 8 6 7-6 5 7-8 3-9-2Z" fill="#8d6a4c"/></svg></div>
  </footer>
</div>
</body>
</html>
```

FILE: styles.css
```css
* { box-sizing: border-box; }
html, body { margin: 0; padding: 0; }
body { font-family: Inter, "Noto Sans", sans-serif; background: #000; }
p, h2, h3, dl, dd { margin: 0; }
.sprite { position: absolute; width: 0; height: 0; }

.screen { position: relative; width: 3456px; height: 2234px; overflow: hidden; display: flex; flex-direction: column; background: #000; }

.wallpaper {
  position: absolute; left: 0; right: 0; bottom: 0; height: 120px; overflow: hidden;
  background:
    linear-gradient(180deg, #000 12%, #2a2a18 30%, #8f8a58 50%, #e6dd8e 72%, #f3eba0 100%) no-repeat right top / 76px 100%,
    linear-gradient(180deg, #000 0, rgba(0,0,0,0) 92%),
    linear-gradient(90deg, #0c130a 0, #1a2a12 8%, #101608 20%, #2a2418 40%, #1c1a12 60%, #2c3322 72%, #4a3a2a 88%, #4a3a2a 92%, #f3eba0 92.100%);
}
.wp-url { position: absolute; left: 3372px; top: 24px; font: 700 29px "Liberation Sans", sans-serif; color: #111; white-space: nowrap; }
.wp-git { position: absolute; left: 3238px; top: 106px; font: 700 29px "Liberation Sans", sans-serif; color: #111; white-space: nowrap; }

/* menu bar */
.menubar { position: relative; flex: 0 0 74px; display: flex; align-items: center; background: linear-gradient(90deg, #4c4f47, #474a3c 60%, #40433a); color: #fff; }
.apple { width: 28px; height: 34px; margin: 0 0 4px 41px; }
.menus { display: flex; align-items: center; gap: 42.500px; margin-left: 39px; font-size: 25px; font-weight: 500; }
.menu-app { margin-right: -4px; font-size: 26px; font-weight: 700; letter-spacing: .2px; }
.status { margin-left: auto; margin-right: 20px; display: grid; grid-template-columns: 70px 72px 82px 76px 76px 96px 68px 62px 70px 72px 138px 68px 64px 64px 300px; align-items: center; justify-items: center; }
.st { height: 36px; width: 36px; filter: drop-shadow(0 2px 3px rgba(0,0,0,.25)); }
.st-cc { width: 44px; }
.st-white { color: #f4f4f2; }
.batt { display: flex; align-items: center; gap: 6px; font-size: 22px; color: #f4f4f2; }
.batt svg { width: 54px; height: 26px; }
.siri { width: 28px; height: 36px; border-radius: 50%; background: radial-gradient(circle at 55% 48%, #fff 0 8%, rgba(120,80,170,.7) 30%, transparent 55%), conic-gradient(#4aa08a, #3a8ad0 35%, #3f56a8 50%, #d03a70 70%, #c0406a 82%, #4aa08a); }
.clock { font-size: 26px; white-space: nowrap; color: #fff; }

/* window */
.window { position: relative; margin-top: 2px; height: 2038px; flex: 0 0 2038px; border-radius: 22px; overflow: hidden; display: flex; flex-direction: column; border-top: 2px solid #6e6e70; background: #fff; }
.window::after { content: ""; position: absolute; left: 0; right: 0; bottom: 0; height: 70px; background: linear-gradient(rgba(0,0,0,0), rgba(0,0,0,.1)); pointer-events: none; }

.tabbar { flex: 0 0 86px; display: flex; align-items: center; background: #1c1b22; position: relative; }
.lights { display: flex; gap: 16px; margin-left: 26px; width: 184px; }
.lights i { width: 24px; height: 24px; border-radius: 50%; }
.l-red { background: #ee6a5e; } .l-yel { background: #f4bd4f; } .l-grn { background: #61c554; }
.fxview { width: 87px; height: 86px; display: flex; align-items: center; border-right: 1px solid #55555c; }
.fxview svg { width: 32px; height: 34px; margin-left: 26px; }
.tab { display: flex; align-items: center; height: 72px; width: 442px; border-radius: 8px; font-size: 22px; color: #b8b8bd; padding-left: 16px; }
.tab:not(.tab-on) { width: 459px; padding-left: 32px; }
.fav { width: 24px; height: 32px; margin-right: 12px; }
.tab-title { flex: 1; white-space: nowrap; }
.tab-x { width: 16px; height: 16px; margin-right: 26px; }
.tab:not(.tab-on) .tab-x { margin-right: 32px; }
.tab-on { background: #52525e; color: #fbfbfe; box-shadow: 0 2px 6px rgba(0,0,0,.4); }
.newtab { width: 24px; height: 24px; margin-left: 31px; }
.tabs-more { width: 24px; height: 24px; margin-left: auto; margin-right: 109px; }

.toolbar { flex: 0 0 72px; display: flex; align-items: flex-start; background: #2b2a33; padding-top: 8px; }
.tb { width: 32px; height: 32px; flex: none; margin-top: 16px; }
.tb-first { margin-left: 32px; }
.toolbar > .tb + .tb { margin-left: 40px; }
.urlbar { width: 2388px; height: 64px; margin-left: 254px; background: #1c1b22; border-radius: 8px; display: flex; align-items: center; padding-left: 18px; }
.ub-shield { width: 28px; height: 32px; }
.ub-lock { width: 26px; height: 32px; margin-left: 29px; }
.url { margin-left: 23px; padding-top: 2px; flex: 1; font-size: 27.150px; color: #fbfbfe; white-space: nowrap; }
.url-path { color: #85858c; }
.ub-star { width: 32px; height: 32px; margin-right: 16px; }
.tb-right { display: flex; margin-left: auto; margin-right: 32px; gap: 40px; }
.tb-right .tb { margin-top: 16px; }
.acct { position: relative; display: block; width: 32px; height: 48px; }
.acct-dot { position: absolute; top: 4px; right: -8px; width: 12px; height: 12px; border-radius: 50%; background: #4aa3f0; }

.bookmarks { flex: 0 0 64px; display: flex; align-items: center; background: #2b2a33; padding: 8px 0 0 24px; gap: 25.300px; font-size: 22px; color: #fbfbfe; }
.bm { display: flex; align-items: center; gap: 8px; white-space: nowrap; }
.bm-first { margin-right: 13px; }
.bi { width: 32px; height: 32px; flex: none; }
.bm-more { width: 28px; height: 26px; margin-left: auto; margin-right: 3px; }
.bm:last-child { margin-right: 24px; }

.banner { position: relative; z-index: 2; flex: 0 0 91px; display: flex; align-items: center; padding: 0 49px 0 32px; background: #18407e; border-top: 1px solid #26314a; border-bottom: 2px solid #1f4f94; color: #f4f6fa; font-size: 27.400px; box-shadow: 0 4px 16px rgba(0,0,0,.12); }
.banner a { text-decoration: underline; }
.banner-x { width: 20px; height: 20px; margin-left: auto; }

/* app */
.app { position: relative; flex: 1; min-height: 0; display: flex; overflow: hidden; }
.sidebar { flex: 0 0 576px; background: #fff; border-right: 2px solid #e5e7eb; padding: 0 36px 0 65px; }
.side-row { display: flex; align-items: center; height: 60px; font-size: 35px; font-weight: 500; color: #374151; }
.side-row span { margin-left: 29px; }
.ico-folder { width: 41px; height: 35px; flex: none; }
.ico-chev { width: 22px; height: 12px; margin-left: auto; margin-right: 32px; }
.ico-doc { width: 34px; height: 41px; flex: none; margin-left: 4px; }
.ico-doc + span { margin-left: 32px; }
.side-tool { margin-top: 16px; height: 90px; }
.side-dev { margin-top: 22px; height: 90px; }
.sub { display: flex; align-items: center; height: 90px; margin-left: 43px; padding-left: 30px; font-size: 30px; color: #4b5563; }
.sub svg { width: 32px; height: 32px; flex: none; }
.sub span { margin-left: 28px; }
.sub-on { height: 84px; margin-top: 33px; margin-bottom: 7px; padding: 3px 0 0 29px; color: #2f55d4; background: #eff6ff; border: 2px solid #bfdbfe; border-radius: 16px; font-weight: 500; }
.sub-on span { margin-left: 30px; }

.main { position: relative; flex: 1; min-width: 0; background: #f9fafb; padding: 65px 72px 0; }
.tabs { display: grid; grid-template-columns: repeat(4, 1fr); height: 90px; padding: 9px 10px; background: #f3f4f6; border-radius: 12px; }
.tabs-item { display: flex; align-items: center; justify-content: center; padding-top: 2px; font-size: 30.500px; font-weight: 500; color: #6b7280; border-radius: 8px; }
.tabs-on { background: #f7f8f9; color: #374151; box-shadow: 0 2px 4px rgba(0,0,0,.06); }
.details { width: 2015px; margin-top: 54px; }
.details-head { display: flex; align-items: center; justify-content: space-between; height: 90px; }
.details-head h2 { font-size: 43px; font-weight: 600; color: #374151; letter-spacing: -.4px; }
.edit-btn { display: flex; align-items: center; gap: 17px; height: 90px; width: 291px; padding: 0 0 0 36px; border: 0; border-radius: 14px; background: #4f81f0; color: #fff; font: 500 31px Inter, sans-serif; }
.edit-btn svg { width: 38px; height: 38px; }
.card-grid { display: grid; grid-template-columns: 980px 980px; column-gap: 55px; row-gap: 55px; margin-top: 54px; }
.card { height: 1012px; padding: 54px 54px 0; background: #fff; border: 2px solid #e5e7eb; border-radius: 16px; box-shadow: 0 1px 2px rgba(0,0,0,.04); }
.card-wide { grid-column: 1 / -1; height: 600px; }
.card h3 { font-size: 52px; line-height: 60px; font-weight: 600; letter-spacing: -2px; color: #374151; }
.fields { margin-top: 58px; display: flex; flex-direction: column; gap: 48.400px; }
.field dt { font-size: 31px; line-height: 45px; color: #414b5a; }
.field dd { margin-top: 21px; font-size: 34.200px; line-height: 46px; color: #111827; }
.scrollthumb { position: absolute; right: 6px; top: 264px; width: 12px; height: 952px; border-radius: 6px; background: #6e6e6e; }

/* dock */
.dock { position: relative; margin: 2px 0 0 73px; width: 3311px; height: 107px; flex: none; padding: 14px 0 0 15px; display: flex; align-items: flex-start; gap: 20px; border: 2px solid #3d3f39; border-radius: 30px; background: linear-gradient(90deg, #1f221d 0, #20221d 33%, #24201b 45%, #22241f 62%, #22241f 78%, #3c2f26 88%, #4e452e 94%, #5d5636 100%); }
.di { position: relative; flex: 0 0 69.400px; height: 70px; }
.di svg { display: block; width: 100%; height: 100%; overflow: visible; }
.di svg.tall { height: 80px; margin-top: -8px; }
.dot::after { content: ""; position: absolute; left: 31px; top: 80px; width: 7px; height: 7px; border-radius: 50%; background: #8a8a88; }
.badge { position: absolute; top: -9px; right: -6px; min-width: 30px; height: 34px; padding: 0 4px; border-radius: 17px; background: #e2493c; color: #fff; font-size: 16px; font-weight: 400; line-height: 34px; text-align: center; }
.badge-wide { right: -10px; min-width: 50px; font-size: 15px; }
.cal-mon { font: 500 14px Inter, sans-serif; fill: #fff; text-anchor: middle; }
.cal-day { font: 300 38px Inter, sans-serif; fill: #2a2a2a; text-anchor: middle; }
.tv { font: 500 32px Inter, sans-serif; fill: #f2f2f2; text-anchor: middle; }
.docx { font: 500 15px Inter, sans-serif; fill: #8a8d92; text-anchor: middle; }
.knot-dark { color: #2b2b2b; }
.dock-sep { flex: none; width: 2px; height: 80px; background: #6b6b66; }
.dock-sep-a { margin: 0 7px 0 12px; }
.dock-sep-b { margin: 0 14px 0 10px; }
.di-doc { flex: 0 0 58px; height: 81px; margin-top: -7px; }
.di-shot { flex: 0 0 70px; height: 81px; margin: -7px 0 0 6px; }
.di-shot2 { margin-left: 0; }
.di-trash { flex: 0 0 62px; height: 80px; margin: -7px 0 0 4px; }
```
